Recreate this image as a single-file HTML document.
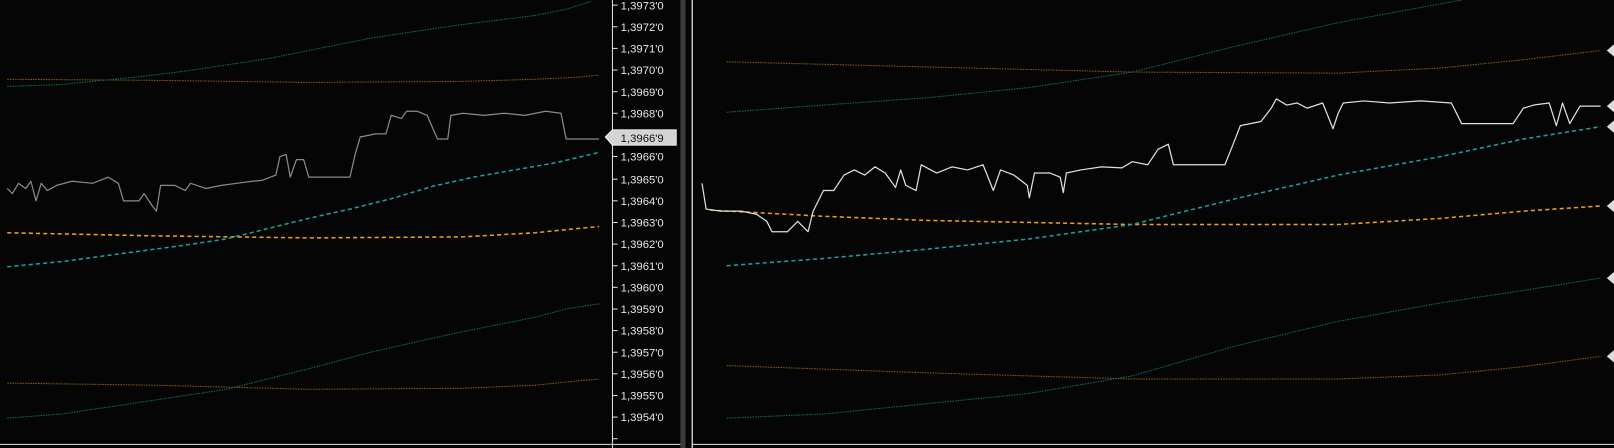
<!DOCTYPE html>
<html><head><meta charset="utf-8"><style>
html,body{margin:0;padding:0;background:#050505;overflow:hidden}
svg{display:block}
text{font-family:"Liberation Sans",Arial,sans-serif;font-size:11px;fill:#e8e8e8}
</style></head><body>
<svg width="1614" height="448" viewBox="0 0 1568 435" preserveAspectRatio="none" xmlns="http://www.w3.org/2000/svg">
<rect width="1568" height="435" fill="#050505"/>
<g fill="none" stroke-linejoin="round">
<polyline stroke="#8a5a10" stroke-width="1" stroke-dasharray="1.5 1" points="7,77 150,78 300,80 450,79 520,77 560,75 582,73"/>
<polyline stroke="#0e6a6a" stroke-width="1" stroke-dasharray="1.5 1" points="7,84 60,82 100,78 140,74 180,69 220,63 260,57 300,49 330,43 360,37 400,31 440,25 480,20 520,15 550,9 575,1"/>
<polyline stroke="#8a5a10" stroke-width="1" stroke-dasharray="1.5 1" points="7,372 150,374 300,378 450,377 520,374 560,370 582,368"/>
<polyline stroke="#0e6a6a" stroke-width="1" stroke-dasharray="1.5 1" points="7,406 60,402 100,396 140,390 180,384 220,378 260,368 300,358 330,350 360,342 400,333 440,324 480,316 520,308 550,300 582,295"/>
<polyline stroke="#f0a010" stroke-width="1.5" stroke-dasharray="4 3" points="7,226 150,229 300,231 450,230 520,226 560,222 582,220"/>
<polyline stroke="#1aa0a0" stroke-width="1.5" stroke-dasharray="4 3" points="7,259 60,254 120,246 180,238 220,232 260,222 300,212 340,203 380,193 420,181 460,172 500,165 540,158 582,148"/>
<polyline stroke="#8a8a8a" stroke-width="1.2" points="7,183 12,188 18,178 25,183 30,176 35,195 40,178 46,185 55,180 70,176 90,178 105,172 115,178 120,195 135,195 140,188 148,200 152,205 156,180 170,180 180,185 185,178 200,183 215,180 230,178 245,176 255,175 268,170 272,152 278,150 282,172 288,155 295,155 300,172 340,172 345,150 350,133 365,130 375,130 380,112 390,115 395,108 405,108 415,112 425,135 435,135 438,112 450,110 470,112 490,110 510,112 530,108 545,110 550,135 582,135"/>
<polyline stroke="#8a5a10" stroke-width="1" stroke-dasharray="1.5 1" points="706,60 900,65 1100,70 1300,71 1400,66 1480,58 1555,49"/>
<polyline stroke="#0e6a6a" stroke-width="1" stroke-dasharray="1.5 1" points="706,109 800,102 900,95 1000,85 1100,70 1200,45 1300,22 1420,0"/>
<polyline stroke="#8a5a10" stroke-width="1" stroke-dasharray="1.5 1" points="706,355 900,362 1100,368 1300,368 1400,364 1480,356 1555,346"/>
<polyline stroke="#0e6a6a" stroke-width="1" stroke-dasharray="1.5 1" points="706,406 800,402 900,392 1000,382 1100,365 1200,336 1300,312 1400,294 1480,282 1555,270"/>
<polyline stroke="#f0a010" stroke-width="1.5" stroke-dasharray="4 3" points="690,204 800,210 900,214 1100,218 1300,218 1400,212 1480,205 1555,200"/>
<polyline stroke="#1aa0a0" stroke-width="1.5" stroke-dasharray="4 3" points="706,258 800,251 900,242 1000,232 1100,218 1200,193 1300,170 1400,152 1480,135 1555,123"/>
<polyline stroke="#e0e0e0" stroke-width="1.2" points="682,178 686,203 700,205 720,205 735,208 745,215 750,225 765,225 775,215 785,225 790,205 800,185 810,185 820,170 830,165 840,170 850,162 860,168 870,182 875,165 880,180 890,185 895,160 910,168 925,162 940,165 955,160 965,185 972,165 985,170 998,180 1000,192 1005,168 1020,168 1030,172 1033,187 1036,168 1050,165 1070,162 1090,163 1100,157 1115,160 1125,145 1135,140 1140,160 1190,160 1198,140 1205,122 1225,118 1235,105 1240,96 1250,102 1260,100 1270,105 1285,100 1295,125 1300,110 1305,100 1325,98 1350,100 1380,98 1410,100 1420,120 1470,120 1480,105 1490,102 1505,100 1512,122 1518,100 1525,120 1535,103 1555,103"/>
</g>
<g fill="#dcdcdc">
<polygon points="1568,43 1561,49 1568,55"/>
<polygon points="1568,97 1561,103 1568,109"/>
<polygon points="1568,117 1561,123 1568,129"/>
<polygon points="1568,194 1561,200 1568,206"/>
<polygon points="1568,264 1561,270 1568,276"/>
<polygon points="1568,340 1561,346 1568,352"/>
</g>
<line x1="595" y1="0" x2="595" y2="435" stroke="#e0e0e0" stroke-width="1"/>
<g stroke="#e0e0e0" stroke-width="1">
<line x1="595" y1="5" x2="600" y2="5"/><line x1="595" y1="26" x2="600" y2="26"/><line x1="595" y1="47" x2="600" y2="47"/><line x1="595" y1="68" x2="600" y2="68"/><line x1="595" y1="89" x2="600" y2="89"/><line x1="595" y1="110" x2="600" y2="110"/><line x1="595" y1="152" x2="600" y2="152"/><line x1="595" y1="174" x2="600" y2="174"/><line x1="595" y1="195" x2="600" y2="195"/><line x1="595" y1="216" x2="600" y2="216"/><line x1="595" y1="237" x2="600" y2="237"/><line x1="595" y1="258" x2="600" y2="258"/><line x1="595" y1="279" x2="600" y2="279"/><line x1="595" y1="300" x2="600" y2="300"/><line x1="595" y1="321" x2="600" y2="321"/><line x1="595" y1="342" x2="600" y2="342"/><line x1="595" y1="363" x2="600" y2="363"/><line x1="595" y1="384" x2="600" y2="384"/><line x1="595" y1="405" x2="600" y2="405"/><line x1="595" y1="426" x2="600" y2="426"/>
</g>
<g>
<text x="603" y="9">1,3973'0</text><text x="603" y="30">1,3972'0</text><text x="603" y="51">1,3971'0</text><text x="603" y="72">1,3970'0</text><text x="603" y="93">1,3969'0</text><text x="603" y="114">1,3968'0</text><text x="603" y="156">1,3966'0</text><text x="603" y="178">1,3965'0</text><text x="603" y="199">1,3964'0</text><text x="603" y="220">1,3963'0</text><text x="603" y="241">1,3962'0</text><text x="603" y="262">1,3961'0</text><text x="603" y="283">1,3960'0</text><text x="603" y="304">1,3959'0</text><text x="603" y="325">1,3958'0</text><text x="603" y="346">1,3957'0</text><text x="603" y="367">1,3956'0</text><text x="603" y="388">1,3955'0</text><text x="603" y="409">1,3954'0</text>
</g>
<polygon points="588,133 595,126 657,126 657,141 595,141" fill="#d4d4d4" stroke="#fff" stroke-width="0.8"/>
<text x="603" y="138" style="fill:#111">1,3966'9</text>
<rect x="661" y="0" width="5" height="435" fill="#3a3a3a"/>
<line x1="672.5" y1="0" x2="672.5" y2="435" stroke="#e8e8e8" stroke-width="1.2"/>
<line x1="0" y1="431.5" x2="661" y2="431.5" stroke="#e0e0e0" stroke-width="1"/>
<line x1="672" y1="431.5" x2="1568" y2="431.5" stroke="#e0e0e0" stroke-width="1"/>
</svg>
</body></html>
